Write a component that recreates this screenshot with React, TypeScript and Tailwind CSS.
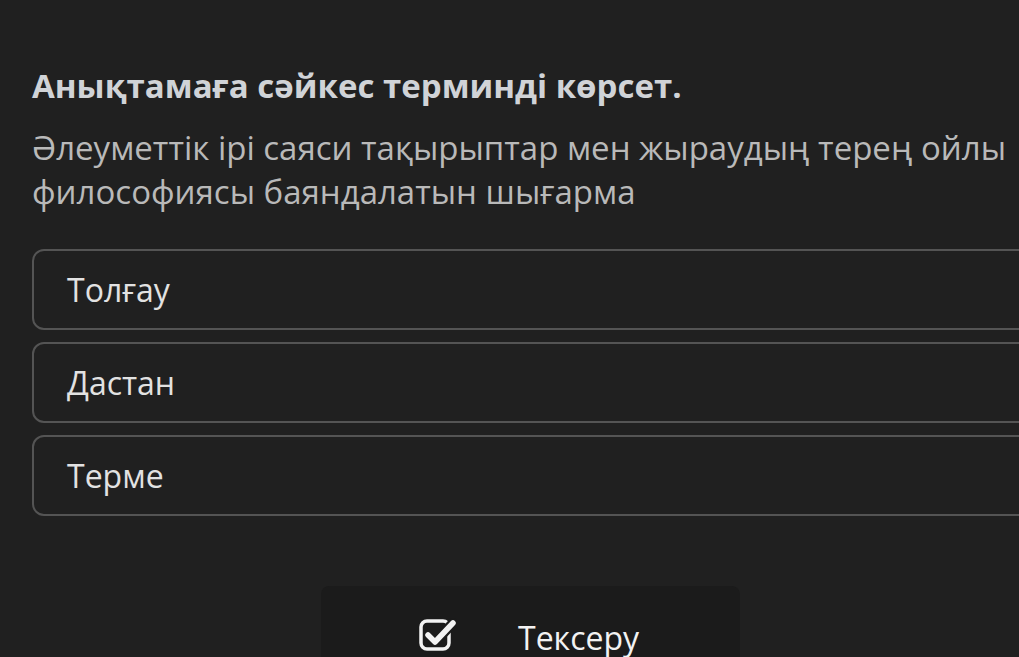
const options = ['Толғау', 'Дастан', 'Терме']

function CheckSquare() {
  return (
    <svg width="38" height="34" viewBox="0 0 38 34" fill="none" aria-hidden="true">
      <rect x="2" y="3" width="28" height="28" rx="6" stroke="#f2f2f2" strokeWidth="3.5" />
      <path d="M9 17l7 7L34 5" stroke="#1b1b1b" strokeWidth="10" strokeLinecap="round" strokeLinejoin="round" />
      <path d="M9 17l7 7L34 5" stroke="#f2f2f2" strokeWidth="5.5" strokeLinecap="round" strokeLinejoin="round" />
    </svg>
  )
}

export default function App() {
  return (
    <div
      className="w-[1019px] h-[657px] overflow-hidden bg-[#202020]"
      style={{ fontFamily: '"Open Sans", "Noto Sans", sans-serif' }}
    >
      <div className="w-[1200px] pl-[32px] pt-[64px]">
        {/* Question */}
        <h2 className="text-[33px] font-bold leading-[44px] text-[#d0d3d7]">
          Анықтамаға сәйкес терминді көрсет.
        </h2>
        <p className="mt-[18px] w-[1000px] text-[33px] leading-[44px] text-[#b9b9b9]">
          Әлеуметтік ірі саяси тақырыптар мен жыраудың терең ойлы философиясы баяндалатын шығарма
        </p>

        {/* Answers */}
        <div className="mt-[35px] flex flex-col gap-[12px]">
          {options.map((o) => (
            <div
              key={o}
              className="h-[81px] w-[1100px] rounded-[12px] border-2 border-[#545454] bg-[#202020] flex items-center pl-[33px] text-[32px] text-[#e2e2e2]"
            >
              {o}
            </div>
          ))}
        </div>

        {/* Check button */}
        <div className="mt-[70px] ml-[289px] w-[419px] h-[100px] rounded-[8px] bg-[#1b1b1b] flex items-start pt-[32px]">
          <div className="ml-[98px] mt-[0px]">
            <CheckSquare />
          </div>
          <span className="ml-[61px] text-[32px] leading-[40px] text-[#f2f2f2]">Тексеру</span>
        </div>
      </div>
    </div>
  )
}
